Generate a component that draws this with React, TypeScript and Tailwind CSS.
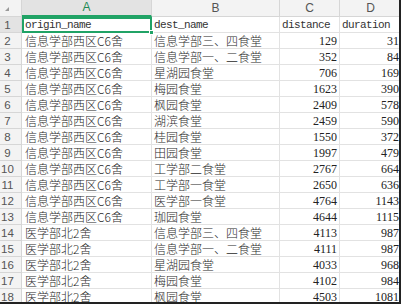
import React from 'react';

const ROWS: [string, string, number, number][] = [
  ['信息学部西区C6舍', '信息学部三、四食堂', 129, 31],
  ['信息学部西区C6舍', '信息学部一、二食堂', 352, 84],
  ['信息学部西区C6舍', '星湖园食堂', 706, 169],
  ['信息学部西区C6舍', '梅园食堂', 1623, 390],
  ['信息学部西区C6舍', '枫园食堂', 2409, 578],
  ['信息学部西区C6舍', '湖滨食堂', 2459, 590],
  ['信息学部西区C6舍', '桂园食堂', 1550, 372],
  ['信息学部西区C6舍', '田园食堂', 1997, 479],
  ['信息学部西区C6舍', '工学部二食堂', 2767, 664],
  ['信息学部西区C6舍', '工学部一食堂', 2650, 636],
  ['信息学部西区C6舍', '医学部一食堂', 4764, 1143],
  ['信息学部西区C6舍', '珈园食堂', 4644, 1115],
  ['医学部北2舍', '信息学部三、四食堂', 4113, 987],
  ['医学部北2舍', '信息学部一、二食堂', 4111, 987],
  ['医学部北2舍', '星湖园食堂', 4033, 968],
  ['医学部北2舍', '梅园食堂', 4102, 984],
  ['医学部北2舍', '枫园食堂', 4503, 1081],
];

const cjk = "font-['Noto_Sans_CJK_SC',sans-serif] font-light text-[12px] text-[#2a2a2a]";
const mono = "font-['Liberation_Mono',monospace] text-[11px] tracking-[-0.6px] leading-[12px]";
const num = "font-['Liberation_Serif',serif] text-[12px] text-[#222]";
const cell = 'h-[16px] flex items-center border-r border-b border-[#e2e2e2] overflow-hidden whitespace-nowrap leading-[14px]';
const rowHead = "h-[16px] flex items-center border-r border-b border-[#d6d6d6] text-[#555] font-['Liberation_Sans',sans-serif] text-[11.5px] leading-[14px]";

const App: React.FC = () => {
  return (
    <div className="w-[401px] h-[304px] overflow-hidden bg-white border-r-2 border-b-2 border-[#222] text-[#333]">
      <div className="grid grid-cols-[22px_130px_128px_60px_62px] w-[402px]">
        {/* column headers */}
        <div className="h-[17px] bg-[#f3f3f3] border-r border-b border-[#d6d6d6] flex items-end justify-end pr-[12px] pb-[5px]">
          <div className="w-0 h-0 border-l-[4px] border-l-transparent border-b-[4px] border-b-[#9a9a9a]" />
        </div>
        <div className="h-[17px] leading-[15px] bg-[#e3e3e3] border-r border-b-2 border-b-[#21a366] border-r-[#d6d6d6] text-center text-[#1e8a55] font-['Liberation_Sans',sans-serif] text-[12px]">A</div>
        {['B', 'C', 'D'].map((l) => (
          <div key={l} className="h-[17px] leading-[16px] bg-[#f3f3f3] border-r border-b border-[#d6d6d6] text-center text-[#555] font-['Liberation_Sans',sans-serif] text-[12px]">{l}</div>
        ))}

        {/* row 1 */}
        <div className={`${rowHead} bg-[#e3e3e3] text-[#1e8a55]`}><span className="w-[15px] text-center">1</span></div>
        <div className="relative h-[16px] flex items-center border-2 border-[#21a366] pl-[1px] text-[#333]">
          <span className={mono}>origin_name</span>
          <div className="absolute right-[-4px] bottom-[-4px] w-[5px] h-[5px] bg-[#21a366] border border-white" />
        </div>
        <div className={`${cell} pl-[2px]`}><span className={mono}>dest_name</span></div>
        <div className={`${cell} pl-[2px]`}><span className={mono}>distance</span></div>
        <div className={`${cell} pl-[2px]`}><span className={mono}>duration</span></div>

        {ROWS.map((r, i) => (
          <React.Fragment key={i}>
            <div className={`${rowHead} bg-[#f3f3f3]`}><span className="w-[15px] text-center">{i + 2}</span></div>
            <div className={`${cell} pl-[3px] ${cjk}`}>{r[0]}</div>
            <div className={`${cell} pl-[2px] ${cjk}`}>{r[1]}</div>
            <div className={`${cell} pr-[2px] justify-end ${num}`}>{r[2]}</div>
            <div className={`${cell} pr-[2px] justify-end ${num}`}>{r[3]}</div>
          </React.Fragment>
        ))}
      </div>
    </div>
  );
};

export default App;
